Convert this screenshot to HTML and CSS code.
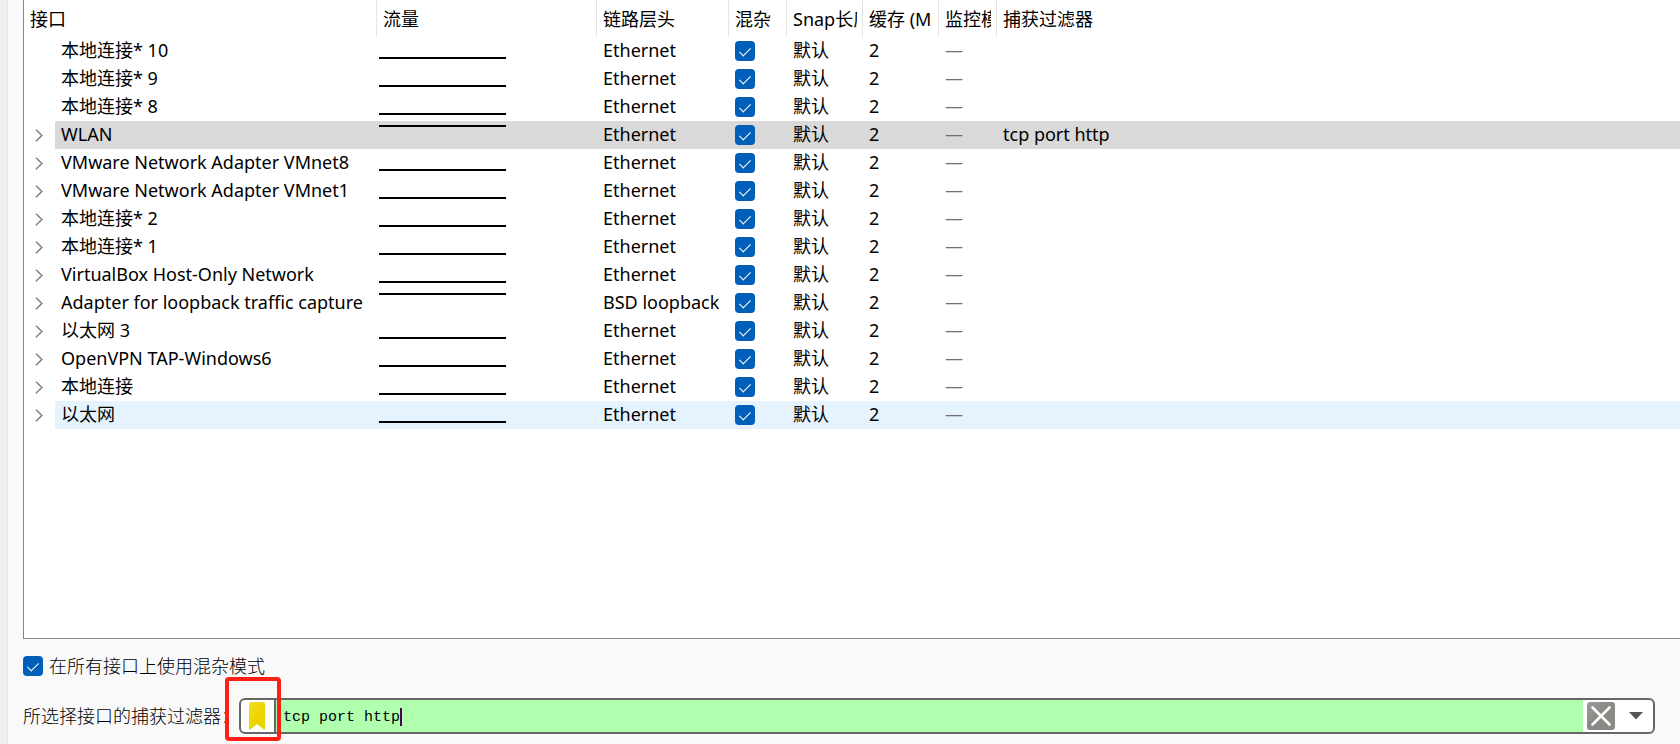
FILE: index.html
```
<!DOCTYPE html>
<html lang="zh-CN">

<head>
  <meta charset="UTF-8">
  <title>捕获选项</title>
  <meta name="viewport" content="width=device-width,initial-scale=1.0">
  <link rel="stylesheet" href="styles.css">
</head>

<body>

  <svg class="defs" width="0" height="0" aria-hidden="true">
    <symbol id="chevron" viewBox="0 0 8 13">
      <path d="M1 .8 6.8 6.5 1 12.2" fill="none" stroke="#858585" stroke-width="1.6" />
    </symbol>
  </svg>

  <main class="dialog">

    <div class="panel">
      <table class="interfaces">
        <colgroup>
          <col class="col-name">
          <col class="col-traffic">
          <col class="col-link">
          <col class="col-promisc">
          <col class="col-snap">
          <col class="col-buffer">
          <col class="col-monitor">
          <col>
        </colgroup>
        <thead>
          <tr>
            <th><span>接口</span></th>
            <th><span>流量</span></th>
            <th><span>链路层头</span></th>
            <th><span>混杂</span></th>
            <th><span>Snap长度</span></th>
            <th><span>缓存 (MB)</span></th>
            <th><span>监控模式</span></th>
            <th><span>捕获过滤器</span></th>
          </tr>
        </thead>
        <tbody id="rows"></tbody>
      </table>
    </div>

    <div class="promisc-all">
      <input type="checkbox" id="promisc-all" checked>
      <label for="promisc-all">在所有接口上使用混杂模式</label>
    </div>

    <div class="filter-row">
      <label for="filter">所选择接口的捕获过滤器：</label>
      <div class="filter-box">
        <div class="bookmark-wrap">
          <button class="bookmark" type="button" aria-label="书签">
            <svg width="16" height="28" viewBox="0 0 16 28">
              <defs>
                <linearGradient id="gold" x1="0" y1="0" x2="1" y2="1">
                  <stop offset="0" stop-color="#f3de32" />
                  <stop offset=".5" stop-color="#ecd400" />
                  <stop offset="1" stop-color="#edd400" />
                </linearGradient>
              </defs>
              <path d="M2 0h12a2 2 0 0 1 2 2v24.500q0 2-1.500.8L8 22l-6.500 5.300Q0 28.500 0 26.500V2a2 2 0 0 1 2-2z" fill="url(#gold)" />
            </svg>
          </button>
          <div class="marker"></div>
        </div>
        <div class="filter-text">
          <input type="text" id="filter" value="tcp port http" spellcheck="false">
          <span class="caret"></span>
        </div>
        <button class="clear" type="button" aria-label="清除">
          <svg width="28" height="28" viewBox="0 0 28 28">
            <defs>
              <linearGradient id="grey" x1="0" y1="0" x2="1" y2="1">
                <stop offset="0" stop-color="#9b9d98" />
                <stop offset=".45" stop-color="#888a85" />
                <stop offset="1" stop-color="#888a85" />
              </linearGradient>
            </defs>
            <rect width="28" height="28" rx="3" fill="url(#grey)" />
            <path d="M5.500 5.500 22.500 22.500M22.500 5.500 5.500 22.500" stroke="#fff" stroke-width="2.600" stroke-linecap="round" />
          </svg>
        </button>
        <button class="drop" type="button" aria-label="历史">
          <svg width="14" height="8" viewBox="0 0 14 8">
            <path d="M0 0h14L7 7.500z" fill="#555753" />
          </svg>
        </button>
      </div>
    </div>

  </main>

  <script>
    const interfaces = [
      { name: '本地连接* 10', leaf: true },
      { name: '本地连接* 9', leaf: true },
      { name: '本地连接* 8', leaf: true },
      { name: 'WLAN', busy: true, filter: 'tcp port http', state: 'selected' },
      { name: 'VMware Network Adapter VMnet8' },
      { name: 'VMware Network Adapter VMnet1' },
      { name: '本地连接* 2' },
      { name: '本地连接* 1' },
      { name: 'VirtualBox Host-Only Network' },
      { name: 'Adapter for loopback traffic capture', busy: true, link: 'BSD loopback' },
      { name: '以太网 3' },
      { name: 'OpenVPN TAP-Windows6' },
      { name: '本地连接' },
      { name: '以太网', state: 'hovered' }
    ];

    const expander = `<button class="expander" type="button" aria-label="展开">
      <svg width="8" height="13"><use href="#chevron"></use></svg></button>`;

    document.querySelector('#rows').innerHTML = interfaces.map(item => `
      <tr class="${item.state || ''}">
        <td class="name-cell">
          <div class="name-row">
            <div class="branch">${item.leaf ? '' : expander}</div>
            <span class="name">${item.name}</span>
          </div>
        </td>
        <td class="traffic"><div class="spark ${item.busy ? 'high' : ''}"></div></td>
        <td>${item.link || 'Ethernet'}</td>
        <td class="promisc"><input type="checkbox" aria-label="混杂 ${item.name}" checked></td>
        <td>默认</td>
        <td>2</td>
        <td class="none">—</td>
        <td>${item.filter || ''}</td>
      </tr>`).join('');
  </script>

</body>

</html>
```
FILE: styles.css
```
* {
  box-sizing: border-box;
}

body {
  margin: 0;
  background-color: #f0f0f0;
  color: #000;
  font-family: "Noto Sans", "Noto Sans CJK SC", sans-serif;
  font-size: 18px;
}

button {
  display: flex;
  align-items: center;
  justify-content: center;
  padding: 0;
  border: 0;
  background: none;
}

.defs {
  position: absolute;
}

.dialog {
  display: flex;
  flex-direction: column;
  min-height: 100vh;
  margin-left: 7px;
  padding-left: 15px;
  padding-bottom: 10px;
  border-left: 1px solid #e5e5e5;
  background-color: #f9f9f9;
}

/* interface list */
.panel {
  flex: 1;
  border-left: 1px solid #828790;
  border-bottom: 1px solid #828790;
  background-color: #fff;
}

.interfaces {
  width: 100%;
  table-layout: fixed;
  border-collapse: separate;
  border-spacing: 0;
}

.col-name {
  width: 353px;
}

.col-traffic {
  width: 220px;
}

.col-link {
  width: 132px;
}

.col-promisc,
.col-monitor {
  width: 58px;
}

.col-snap,
.col-buffer {
  width: 76px;
}

th {
  height: 37px;
  padding: 0 5px 0 6px;
  border-right: 1px solid #e5e5e5;
  font-weight: normal;
  text-align: left;
}

th:last-child {
  border-right: 0;
}

th span {
  display: block;
  overflow: hidden;
  line-height: 28px;
  white-space: nowrap;
}

td {
  height: 28px;
  padding: 0 0 0 6px;
  line-height: 26px;
  vertical-align: top;
  white-space: nowrap;
}

.name-cell {
  padding: 0;
}

.name-row {
  display: flex;
  height: 28px;
}

.branch {
  display: flex;
  width: 31px;
  padding-left: 11px;
}

.name {
  flex: 1;
  padding-left: 6px;
  border-top-left-radius: 2px;
}

.traffic {
  padding-top: 4px;
  padding-left: 2px;
}

.promisc {
  padding-top: 4px;
}

.spark {
  width: 127px;
  height: 18px;
  border-bottom: 2px solid #000;
}

.spark.high {
  border-top: 2px solid #000;
  border-bottom: 0;
}

.none {
  color: #6f6f6f;
}

.selected td:not(.name-cell),
.selected .name {
  background-color: #d9d9d9;
}

.hovered td:not(.name-cell),
.hovered .name {
  background-color: #e5f3ff;
}

input[type="checkbox"] {
  display: flex;
  justify-content: center;
  width: 20px;
  height: 20px;
  margin: 0;
  padding-top: 4px;
  border-radius: 4px;
  background-color: #005fb8;
  appearance: none;
}

input[type="checkbox"]:checked::after {
  width: 5px;
  height: 10px;
  border-right: 1px solid #fff;
  border-bottom: 1px solid #fff;
  content: "";
  transform: rotate(45deg);
}

/* options under the list */
.promisc-all {
  display: flex;
  align-items: center;
  gap: 6px;
  height: 28px;
  margin-top: 13px;
}

.promisc-all label,
.filter-row label {
  padding-bottom: 2px;
  font-family: "Noto Sans CJK SC", sans-serif;
  font-weight: 300;
  line-height: 28px;
}

.filter-row {
  display: flex;
  align-items: center;
  margin-top: 18px;
  padding-right: 25px;
}

.filter-box {
  display: flex;
  flex: 1;
  height: 36px;
  border: 2px solid #666;
  border-radius: 6px;
  background-color: #fff;
}

.bookmark-wrap {
  position: relative;
  display: flex;
  width: 35px;
  border-right: 2px solid #666;
}

.bookmark {
  width: 32px;
}

/* red frame around the bookmark button */
.marker {
  position: absolute;
  top: -23px;
  left: -16px;
  width: 56px;
  height: 64px;
  border: 4px solid #ff2015;
  border-radius: 4px;
  pointer-events: none;
}

.filter-text {
  display: flex;
  flex: 1;
  align-items: center;
  padding-top: 2px;
  padding-left: 7px;
  background-color: #afffaf;
}

.filter-text input {
  width: 13ch;
  padding: 2px 0 0;
  border: 0;
  outline: 0;
  background: none;
  color: #000;
  font-family: "Liberation Mono", monospace;
  font-size: 15px;
  line-height: 20px;
}

.caret {
  width: 2px;
  height: 18px;
  background-color: #500050;
}

.clear {
  width: 36px;
}

.drop {
  width: 34px;
}
```
